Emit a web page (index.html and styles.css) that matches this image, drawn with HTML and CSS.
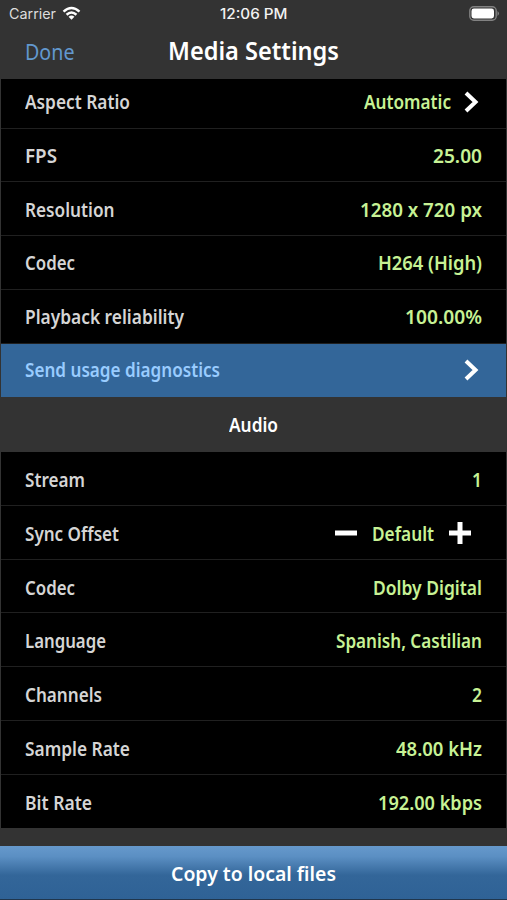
FILE: index.html
```html
<!DOCTYPE html>
<html lang="en">
<head>
<meta charset="utf-8">
<title>Media Settings</title>
<link rel="stylesheet" href="styles.css">
</head>
<body>
<div class="screen">
  <header class="top">
    <div class="status">
      <span class="carrier"><span class="fit" data-width="47">Carrier</span>
        <svg class="wifi" width="19" height="15" viewBox="0 0 20 15"><path d="M1.6 5.5Q10-2.1 18.4 5.5" /><path d="M4.8 8.8Q10 4.1 15.2 8.8"/><path class="solid" d="M6.9 11Q10 8.3 13.1 11L10 14.2Z"/></svg>
      </span>
      <span class="clock"><span class="fit" data-width="67.5">12:06 PM</span></span>
      <svg class="battery" width="31" height="15" viewBox="0 0 31 15"><rect class="case" x=".8" y=".8" width="26.4" height="13.4" rx="4"/><rect class="charge" x="2.5" y="2.5" width="22.5" height="10" rx="2.4"/><path class="cap" d="M28.5 5q3 2.5 0 5z"/></svg>
    </div>
    <div class="nav">
      <a class="done"><span class="fit" data-width="49.5">Done</span></a>
      <h1><span class="fit" data-width="171">Media Settings</span></h1>
    </div>
  </header>
  <main>
    <section class="list video">
      <div class="row"><span class="label fit" data-width="105">Aspect Ratio</span><span class="value fit" data-width="87">Automatic</span><svg class="chevron" width="15" height="22" viewBox="0 0 15 22"><path d="M2 2L11.5 11L2 20"/></svg></div>
      <div class="row"><span class="label fit" data-width="32">FPS</span><span class="value fit" data-width="49">25.00</span></div>
      <div class="row"><span class="label fit" data-width="89.5">Resolution</span><span class="value fit" data-width="122">1280 x 720 px</span></div>
      <div class="row"><span class="label fit" data-width="50">Codec</span><span class="value fit" data-width="104">H264 (High)</span></div>
      <div class="row"><span class="label fit" data-width="159">Playback reliability</span><span class="value fit" data-width="77">100.00%</span></div>
      <div class="row action"><span class="label fit" data-width="195">Send usage diagnostics</span><svg class="chevron" width="15" height="22" viewBox="0 0 15 22"><path d="M2 2L11.5 11L2 20"/></svg></div>
    </section>
    <h2><span class="fit" data-width="49">Audio</span></h2>
    <section class="list audio">
      <div class="row"><span class="label fit" data-width="60">Stream</span><span class="value fit" data-width="10">1</span></div>
      <div class="row"><span class="label fit" data-width="94">Sync Offset</span>
        <span class="stepper"><svg width="24" height="24" viewBox="0 0 24 24"><path d="M1 12H23"/></svg><span class="value fit" data-width="62">Default</span><svg width="24" height="24" viewBox="0 0 24 24"><path d="M1 12H23M12 1V23"/></svg></span></div>
      <div class="row"><span class="label fit" data-width="50">Codec</span><span class="value fit" data-width="109">Dolby Digital</span></div>
      <div class="row"><span class="label fit" data-width="81">Language</span><span class="value fit" data-width="146">Spanish, Castilian</span></div>
      <div class="row"><span class="label fit" data-width="77">Channels</span><span class="value fit" data-width="10">2</span></div>
      <div class="row"><span class="label fit" data-width="105">Sample Rate</span><span class="value fit" data-width="86">48.00 kHz</span></div>
      <div class="row"><span class="label fit" data-width="67">Bit Rate</span><span class="value fit" data-width="104">192.00 kbps</span></div>
    </section>
  </main>
  <footer><button class="copy"><span class="fit" data-width="165">Copy to local files</span></button></footer>
</div>
<script src="fit.js"></script>
</body>
</html>
```
FILE: styles.css
```css
* { box-sizing: border-box; }
body { margin: 0; background: #333; font-family: "Noto Sans", "Open Sans", sans-serif; }
.screen { width: 507px; height: 900px; display: flex; flex-direction: column; overflow: hidden; background: #333; }
.fit { display: inline-block; white-space: nowrap; }
.top { height: 79px; flex: none; }
.status { height: 27px; padding: 0 7px 0 9px; display: grid; grid-template-columns: 1fr 1fr 1fr; align-items: center; color: #f2f2f2; font: 500 13.8px/28px Inter, sans-serif; }
.carrier { display: flex; align-items: center; gap: 6px; color: #ddd; font-weight: 400; }
.clock { text-align: center; margin-left: -1px; }
.wifi { fill: none; stroke: #fff; stroke-width: 2.6; margin-top: -2px; }
.wifi .solid { fill: #fff; stroke: none; }
.battery { justify-self: end; margin-top: -1px; }
.case { fill: none; stroke: #828282; stroke-width: 1.4; }
.charge { fill: #fff; }
.cap { fill: #828282; }
.nav { height: 50px; padding: 0 25px; display: grid; grid-template-columns: 80px 1fr 80px; align-items: center; }
.done { color: #6298ce; font-size: 22.5px; line-height: 46px; }
h1 { margin: 0; color: #fff; font-size: 26px; line-height: 46px; font-weight: 600; text-align: center; margin-top: -5px; }
.list { margin: 0 1px; background: #000; }
.video { height: 318px; }
.audio { height: 376px; }
.row { height: 53.75px; padding: 2px 24px 0; display: flex; align-items: center; border-bottom: 1.5px solid #202020; font-size: 18.9px; line-height: 26px; font-weight: 600; }
.video .row:first-child { height: 49.5px; padding: 0 24px 2px; }
.video .row:last-child { height: 53.5px; padding-top: 0; }
.audio .row { padding-top: 3.5px; }
.row:last-child { border-bottom: 0; }
.label { color: #d5d5d5; }
.value { margin-left: auto; color: #c7f295; }
.chevron { margin-left: 13px; margin-right: 3px; fill: none; stroke: #fff; stroke-width: 4; }
.action { background: #336699; }
.action .label { color: #99ccff; }
.action .chevron { margin-left: auto; }
.stepper { margin-left: auto; margin-right: 10px; display: flex; align-items: center; gap: 14px; fill: none; stroke: #fff; stroke-width: 5; }
.stepper svg { margin-top: -1px; }
h2 { height: 55px; margin: 0; color: #fff; font-size: 18.9px; line-height: 56px; font-weight: 600; text-align: center; }
footer { margin-top: 18px; height: 54px; flex: none; }
.copy { width: 100%; height: 54px; padding: 2px 0 0; border: 0; border-bottom: 1px solid #20364d; background: linear-gradient(#6699cc 0, #5b8fc3 20%, #336699 55%, #2f6296 100%); color: #fff; font: 600 20.5px/51px "Noto Sans", sans-serif; }
```
FILE: fit.js
```js
// Condense or widen each text run to its column width.
document.querySelectorAll('.fit').forEach((el) => {
  const target = Number(el.dataset.width);
  const natural = el.getBoundingClientRect().width;
  el.style.width = target + 'px';
  el.style.transformOrigin = '0 50%';
  el.style.transform = `scaleX(${target / natural})`;
  el.style.textAlign = 'left';
});
```
